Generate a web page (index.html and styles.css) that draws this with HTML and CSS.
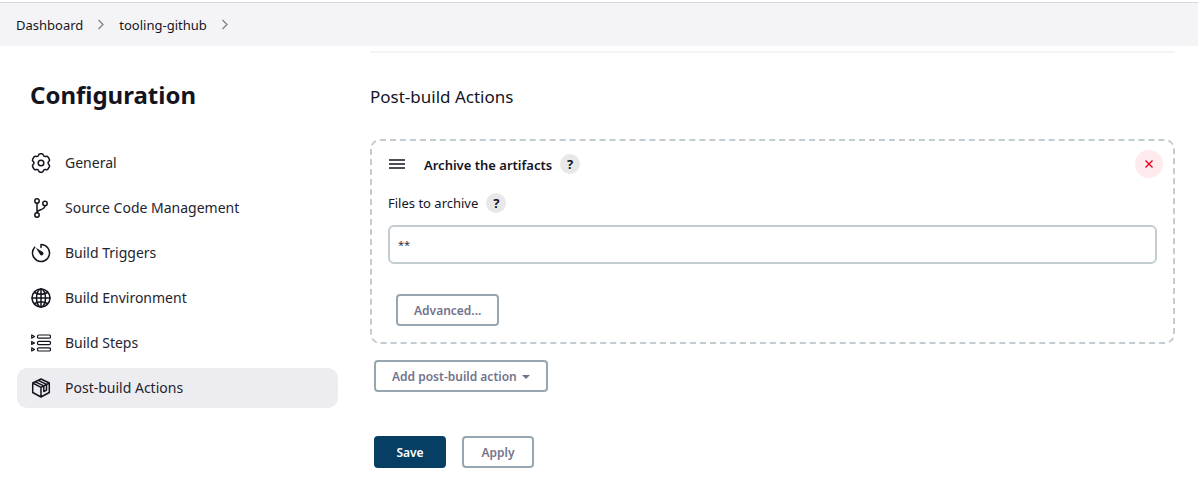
FILE: index.html
```
<!DOCTYPE html>
<html lang="en">
<head>
<meta charset="utf-8">
<title>tooling-github Config</title>
<link rel="stylesheet" href="styles.css">
</head>
<body>
<nav class="breadcrumbs" aria-label="Breadcrumb">
  <a class="crumb" href="#">Dashboard</a>
  <svg class="chevron" viewBox="0 0 8 12" aria-hidden="true"><path d="M1.500 1 6 5.500 1.500 10"/></svg>
  <a class="crumb" href="#">tooling-github</a>
  <svg class="chevron" viewBox="0 0 8 12" aria-hidden="true"><path d="M1.500 1 6 5.500 1.500 10"/></svg>
</nav>
<div class="page">
  <aside class="sidebar">
    <h1 class="page-title">Configuration</h1>
    <nav class="tasks" aria-label="Sections">
      <a class="task" href="#">
        <svg class="icon" viewBox="0 0 20 20" aria-hidden="true"><circle cx="10" cy="10" r="2.800"/><path d="M7.600 2.300Q8 .8 9.300.8h1.400Q12 .8 12.400 2.300 12.900 3.900 14.500 3.500 16.400 2.900 17.100 4.100L18.300 6.200Q19 7.400 17.900 8.400 16.200 10 17.900 11.600 19 12.600 18.300 13.800L17.100 15.900Q16.400 17.100 14.500 16.500 12.900 16.100 12.400 17.700 12 19.200 10.700 19.200H9.300Q8 19.200 7.600 17.700 7.100 16.100 5.500 16.500 3.600 17.100 2.900 15.900L1.700 13.800Q1 12.600 2.100 11.600 3.800 10 2.100 8.400 1 7.400 1.700 6.200L2.900 4.100Q3.600 2.900 5.500 3.500 7.100 3.900 7.600 2.300Z"/></svg>
        General</a>
      <a class="task" href="#">
        <svg class="icon" viewBox="0 0 20 20" aria-hidden="true"><circle cx="6" cy="3" r="2.200"/><circle cx="6" cy="17" r="2.200"/><circle cx="14" cy="5.500" r="2.200"/><path d="M6 5.200v9.600M14 7.700C13.500 13 6.500 10.500 6 14.800"/></svg>
        Source Code Management</a>
      <a class="task" href="#">
        <svg class="icon" viewBox="0 0 20 20" aria-hidden="true"><path d="M10 4.500V1.500A8.500 8.500 0 1 1 3.700 4.300"/><path class="solid" d="M4.800 4.800 11.800 9A1.800 1.800 0 0 1 9.200 11.800Z"/></svg>
        Build Triggers</a>
      <a class="task" href="#">
        <svg class="icon" viewBox="0 0 20 20" aria-hidden="true"><circle cx="10" cy="10" r="9"/><ellipse cx="10" cy="10" rx="4.500" ry="9"/><path d="M10 1v18M1 10h18M3.500 4.500Q10 8 16.500 4.500M3.500 15.500Q10 12 16.500 15.500"/></svg>
        Build Environment</a>
      <a class="task" href="#">
        <svg class="icon thin" viewBox="0 0 20 20" aria-hidden="true"><rect x="6.500" y="2" width="13" height="3.200" rx="1.300"/><rect x="6.500" y="8.400" width="13" height="3.200" rx="1.300"/><rect x="6.500" y="14.800" width="13" height="3.200" rx="1.300"/><path d="M.7 2v3.200L3.500 3.600ZM.7 8.400v3.200L3.500 10ZM.7 14.800V18L3.500 16.400Z"/></svg>
        Build Steps</a>
      <a class="task active" href="#" aria-current="true">
        <svg class="icon" viewBox="0 0 20 20" aria-hidden="true"><path d="M10 1 18.300 5v9.500L10 19 1.700 14.500V5ZM1.700 5 10 9.300 18.300 5M10 9.300V19M7.200 2.400l8.300 4M4.400 3.800l8.400 4.100M12.800 8v5.500l2.700-1.400V6.500"/></svg>
        Post-build Actions</a>
    </nav>
  </aside>
  <main class="content">
    <h2 class="section-title">Post-build Actions</h2>
    <form class="form">
      <section class="step">
        <header class="step-header">
          <svg class="grip" viewBox="0 0 16 12" aria-hidden="true"><path d="M0 2h16M0 6h16M0 10h16"/></svg>
          <h3 class="step-title">Archive the artifacts</h3>
          <button class="help" type="button" aria-label="Help for Archive the artifacts">?</button>
          <button class="remove" type="button" aria-label="Delete">
            <svg class="cross" viewBox="0 0 8 8" aria-hidden="true"><path d="M.5.5l7 7M7.500.5l-7 7"/></svg>
          </button>
        </header>
        <div class="field">
          <div class="field-head">
            <label class="label" for="files">Files to archive</label>
            <button class="help" type="button" aria-label="Help for Files to archive">?</button>
          </div>
          <input class="input" id="files" type="text" value="**">
        </div>
        <button class="button advanced" type="button">Advanced...</button>
      </section>
      <button class="button add" type="button">Add post-build action <span class="caret"></span></button>
      <div class="actions">
        <button class="button primary" type="submit">Save</button>
        <button class="button" type="button">Apply</button>
      </div>
    </form>
  </main>
</div>
</body>
</html>
```
FILE: styles.css
```
* { box-sizing: border-box; }
body {
  margin: 0;
  padding-top: 2px;
  background: #fff;
  color: #14141f;
  font: 13px/20px "Noto Sans", "Open Sans", sans-serif;
}
h1, h2, h3 { margin: 0; }
a { color: inherit; text-decoration: none; }
button, input { font: inherit; color: inherit; margin: 0; }
svg { fill: none; stroke: currentColor; flex: none; }

.breadcrumbs {
  display: flex;
  align-items: center;
  gap: 14px;
  height: 44px;
  padding: 0 16px;
  border-top: 1px solid #d8d8dc;
  background: #f4f4f6;
}
.chevron { width: 8px; height: 12px; color: #808088; stroke-width: 1.3; }

.page {
  display: grid;
  grid-template-columns: 321px minmax(0, 1fr);
  gap: 32px;
  padding: 5px 23px 24px 17px;
}
.page-title {
  padding: 28px 13px 0;
  font-size: 24px;
  line-height: 32px;
  font-weight: 700;
}
.tasks { display: grid; gap: 5px; margin-top: 32px; }
.task {
  display: flex;
  align-items: center;
  gap: 14px;
  height: 40px;
  padding: 0 14px;
  border-radius: 10px;
  color: #24242e;
  font-size: 14px;
}
.task.active { background: #edecf1; }
.icon { width: 20px; height: 20px; color: #14141f; stroke-width: 1.5; stroke-linejoin: round; stroke-linecap: round; }
.icon.thin { stroke-width: 1.2; }
.solid { fill: currentColor; stroke: none; }

.content { border-top: 2px solid #f3f3f8; }
.section-title {
  padding: 32px 0 30px;
  font-size: 17px;
  line-height: 24px;
  font-weight: 400;
}
.form { display: flex; flex-direction: column; align-items: flex-start; }
.step {
  width: 100%;
  padding: 9px 10px 16px 16px;
  border: 2px dashed #c3ccd1;
  border-radius: 10px;
}
.step-header { display: flex; align-items: center; gap: 8px; height: 28px; }
.grip { width: 16px; height: 12px; margin: 0 11px 0 1px; stroke-width: 1.5; }
.step-title { padding-top: 2px; font-size: 13px; line-height: 20px; font-weight: 600; }
.help {
  width: 20px;
  height: 20px;
  padding: 0;
  border: 0;
  border-radius: 50%;
  background: #e8e8e8;
  font-weight: 700;
  line-height: 20px;
}
.remove {
  display: grid;
  place-items: center;
  width: 28px;
  height: 28px;
  margin-left: auto;
  padding: 0;
  border: 0;
  border-radius: 50%;
  background: #fdebed;
  color: #e6001f;
}
.cross { width: 8px; height: 8px; stroke-width: 1.4; }
.field { margin-top: 15px; padding-right: 6px; }
.field-head { display: flex; align-items: center; gap: 8px; }
.input {
  display: block;
  width: 100%;
  height: 39px;
  margin-top: 12px;
  padding: 0 8px;
  border: 2px solid #c3ccd1;
  border-radius: 6px;
  background: #fff;
  color: #33333d;
  font-size: 11px;
}
.button {
  height: 32px;
  min-width: 72px;
  padding: 1px 16px 0;
  border: 2px solid #98a6af;
  border-radius: 4px;
  background: #fff;
  color: #73738c;
  font-size: 12px;
  line-height: 20px;
  font-weight: 600;
}
.advanced { margin: 30px 8px 0; }
.add { display: flex; align-items: center; gap: 5px; margin: 16px 4px 0; }
.caret { border: 4px solid transparent; border-top-color: currentColor; border-bottom: 0; }
.actions { display: flex; gap: 16px; margin: 44px 4px 0; }
.primary { border-color: #063f63; background: #063f63; color: #fff; }
```
